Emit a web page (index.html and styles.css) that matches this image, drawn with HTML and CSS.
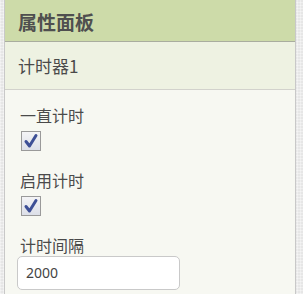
FILE: index.html
```html
<!DOCTYPE html>
<html lang="zh">
<head>
<meta charset="utf-8">
<link rel="stylesheet" href="styles.css">
</head>
<body>
<div class="panel">
  <div class="panel-header">属性面板</div>
  <div class="panel-sub">计时器1</div>
  <div class="panel-body">
    <div class="prop">
      <div class="prop-label">一直计时</div>
      <span class="check"><svg viewBox="0 0 18 18" width="18" height="18"><path d="M4 9.5 L7.5 14 L14 3.5" fill="none" stroke="#3d4f96" stroke-width="3" stroke-linecap="round" stroke-linejoin="round"/></svg></span>
    </div>
    <div class="prop">
      <div class="prop-label">启用计时</div>
      <span class="check"><svg viewBox="0 0 18 18" width="18" height="18"><path d="M4 9.5 L7.5 14 L14 3.5" fill="none" stroke="#3d4f96" stroke-width="3" stroke-linecap="round" stroke-linejoin="round"/></svg></span>
    </div>
    <div class="prop prop-last">
      <div class="prop-label">计时间隔</div>
      <div class="text-input">2000</div>
    </div>
  </div>
</div>
</body>
</html>
```
FILE: styles.css
```css
html, body {
  margin: 0;
  padding: 0;
}
body {
  width: 303px;
  height: 294px;
  overflow: hidden;
  background-color: #e6e6e6;
  background-image:
    repeating-linear-gradient(0deg, rgba(255,255,255,0.35) 0 1px, transparent 1px 3px),
    repeating-linear-gradient(90deg, rgba(255,255,255,0.35) 0 1px, transparent 1px 3px);
  font-family: "Noto Sans CJK SC", "Noto Sans", sans-serif;
  color: #444;
}
.panel {
  margin-left: 4px;
  width: 290px;
  height: 294px;
  border-left: 1px solid #c8c8c8;
  border-right: 1px solid #c8c8c8;
  background: #f7f8f2;
}
.panel-header {
  height: 41px;
  border-bottom: 1px solid #a9ad9f;
  background: #cddba9;
  font-size: 19px;
  font-weight: bold;
  color: #4f4f4f;
  padding-left: 13px;
  line-height: 44px;
}
.panel-sub {
  height: 47px;
  border-bottom: 1px solid #d2d2cc;
  background: #eef2e2;
  font-size: 17px;
  color: #4a4a4a;
  padding-left: 13px;
  line-height: 48px;
}
.panel-body {
  padding: 15px 0 0 15px;
}
.prop {
  margin-bottom: 19px;
}
.prop-label {
  font-size: 16px;
  line-height: 20px;
  height: 20px;
  color: #4a4a4a;
  margin-bottom: 6px;
}
.check {
  display: flex;
  align-items: center;
  justify-content: center;
  margin-left: 1px;
  width: 18px;
  height: 18px;
  border: 1px solid #9a9a9a;
  background: linear-gradient(#f4f4f6, #dcdfe8);
}
.prop-last .prop-label {
  margin-bottom: 1px;
}
.text-input {
  width: 153px;
  height: 32px;
  margin-left: -3px;
  padding-left: 8px;
  border: 1px solid #c9c9c9;
  border-radius: 5px;
  background: #ffffff;
  font-family: "Noto Sans", "Liberation Sans", sans-serif;
  font-size: 14px;
  line-height: 32px;
  color: #444;
}
```
